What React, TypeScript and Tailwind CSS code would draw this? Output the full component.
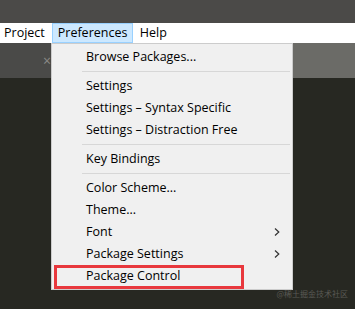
type Entry = { label: string; sub?: boolean; marked?: boolean } | "sep";

const entries: Entry[] = [
  { label: "Browse Packages..." },
  "sep",
  { label: "Settings" },
  { label: "Settings – Syntax Specific" },
  { label: "Settings – Distraction Free" },
  "sep",
  { label: "Key Bindings" },
  "sep",
  { label: "Color Scheme..." },
  { label: "Theme..." },
  { label: "Font", sub: true },
  { label: "Package Settings", sub: true },
  { label: "Package Control", marked: true },
];

export default function App() {
  return (
    <div
      className="relative w-[355px] h-[309px] overflow-hidden flex flex-col bg-[#272822]"
      style={{ fontFamily: '"Open Sans", "Noto Sans", Arial, sans-serif' }}
    >
      <div className="h-[23px] bg-[#4b4a48]" />

      <div className="h-[20px] bg-white flex items-stretch text-[12.5px] text-black">
        <div className="pl-[4px] pr-[6px] flex items-center">Project</div>
        <div className="ml-[1px] px-[5px] flex items-center bg-[#cce8ff] border border-[#99d1ff] w-[81px]">
          Preferences
        </div>
        <div className="px-[7px] flex items-center">Help</div>
      </div>

      <div className="h-[35px] flex">
        <div className="w-[292px] bg-[#4a4a48] flex items-center pl-[43px] text-[#8a8a87] text-[14px] leading-none">
          ×
        </div>
        <div className="flex-1 bg-[#6b6b67]" />
      </div>

      <div className="flex-1 bg-[#272822]" />

      {/* dropdown */}
      <div className="absolute left-[51px] top-[43px] w-[242px] bg-[#f0f0f0] border border-[#cccccc] py-[2px] text-[12.5px] text-black">
        {entries.map((e, i) =>
          e === "sep" ? (
            <div key={i} className="h-[7px] flex items-center pl-[30px] pr-[2px]">
              <div className="h-px w-full bg-[#d7d7d7]" />
            </div>
          ) : (
            <div key={i} className="relative h-[22px] flex items-center pl-[34px]">
              {e.marked && (
                <div className="absolute left-[2px] top-0 w-[190px] h-[24px] border-[3px] border-[#e8383d]" />
              )}
              <span>{e.label}</span>
              {e.sub && (
                <svg
                  className="absolute right-[12px] top-[7px]"
                  width="6"
                  height="8"
                  viewBox="0 0 6 8"
                  fill="none"
                >
                  <path d="M1 0.5 L4.8 4 L1 7.5" stroke="#333" strokeWidth="1.2" />
                </svg>
              )}
            </div>
          )
        )}
      </div>

      <div
        className="absolute right-[7px] bottom-[11px] text-[8px] leading-none text-[#5a5a55]"
        style={{ fontFamily: '"Noto Sans CJK SC", "Noto Sans", sans-serif' }}
      >
        @稀土掘金技术社区
      </div>
    </div>
  );
}
